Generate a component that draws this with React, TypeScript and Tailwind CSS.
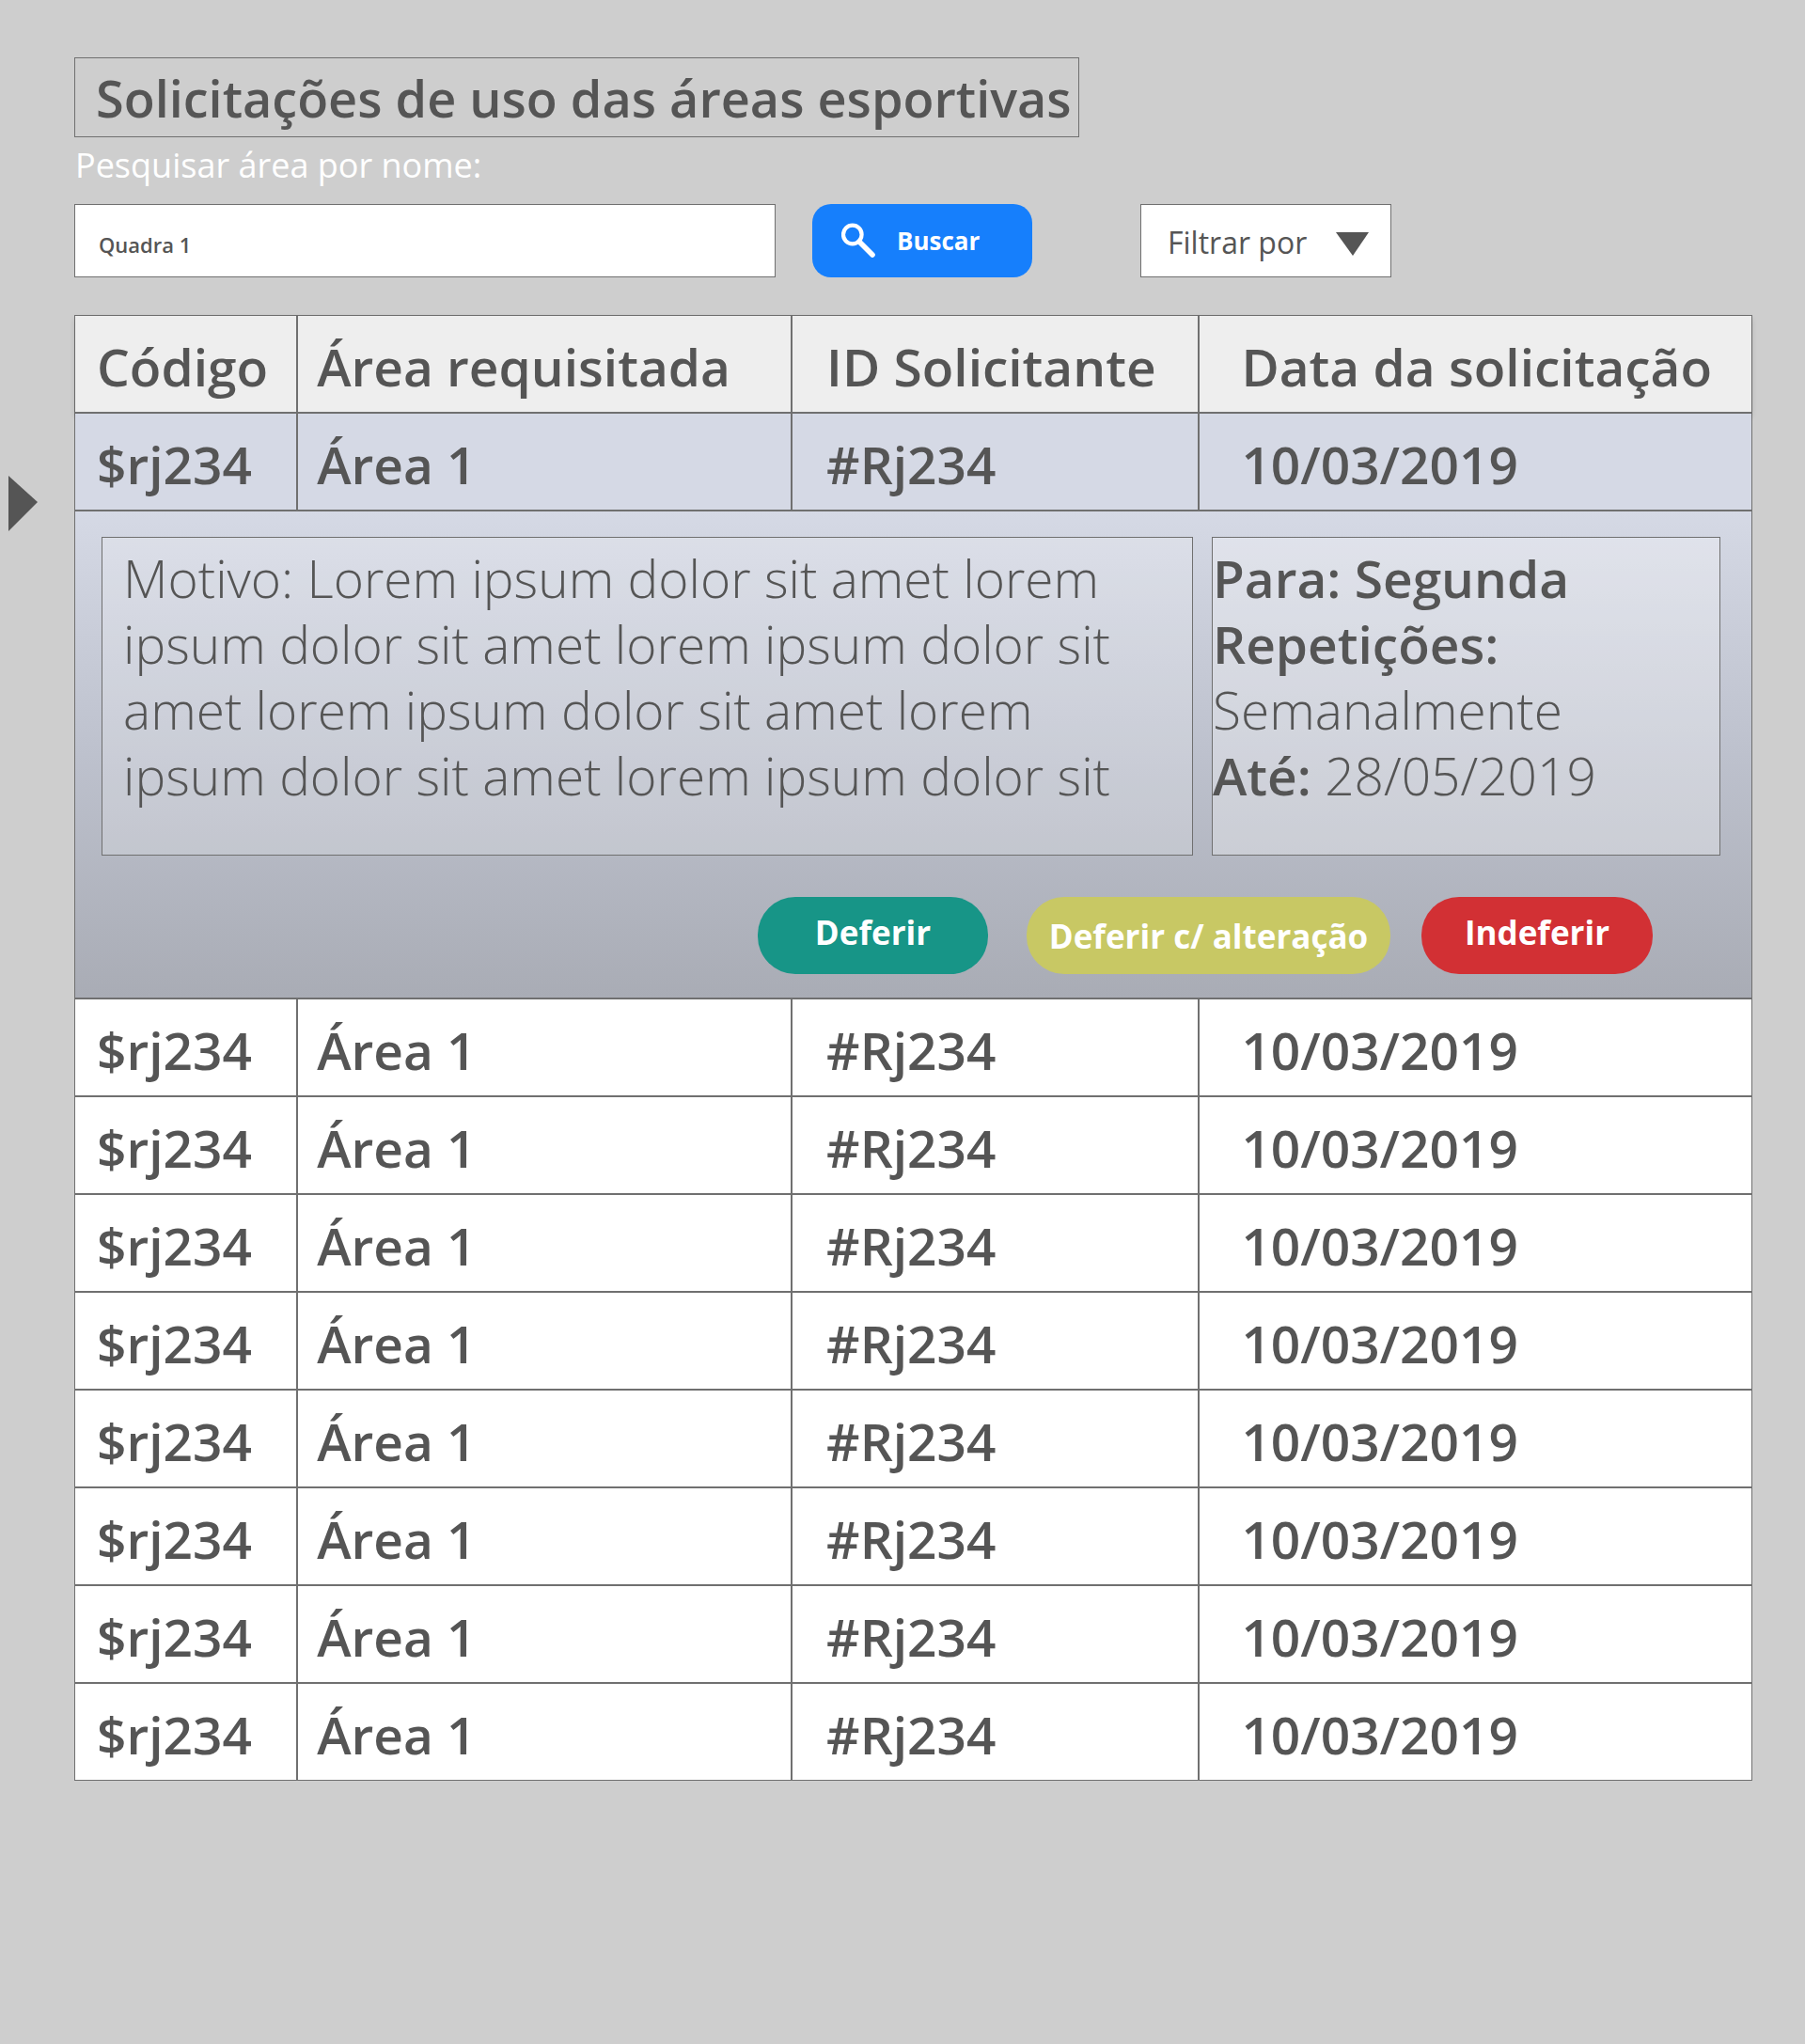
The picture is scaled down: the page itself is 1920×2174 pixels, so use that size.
import React from "react";

const requests = Array.from({ length: 8 }, (_, i) => ({
  key: i,
  code: "$rj234",
  area: "Área 1",
  requester: "#Rj234",
  date: "10/03/2019",
}));

const cell = "h-[104px] border-b-2 border-[#707070] pt-1.5 text-left font-semibold whitespace-nowrap";
const lastCell = "group-last:h-[102px] group-last:border-b-0";
const divider = "border-r-2";

function RequestRow({ selected = false, code, area, requester, date }: { selected?: boolean; code: string; area: string; requester: string; date: string }) {
  return (
    <tr className={selected ? "group bg-[#d5d9e5]" : "group bg-white"}>
      <td className={`${cell} ${lastCell} ${divider} pl-[23px]`}>{code}</td>
      <td className={`${cell} ${lastCell} ${divider} pl-5`}>{area}</td>
      <td className={`${cell} ${lastCell} ${divider} pl-9`}>{requester}</td>
      <td className={`${cell} ${lastCell} pl-11`}>{date}</td>
    </tr>
  );
}

export default function App() {
  return (
    <div className="flex min-h-screen bg-[#cecece] pr-14 pb-20 font-['Open_Sans','Noto_Sans',sans-serif] text-[#555555]">
      <aside className="w-[79px] shrink-0 pt-[506px] pl-[9px]">
        <svg width="31" height="59" viewBox="0 0 31 59" aria-hidden="true">
          <path d="M0 0 31 28 0 59Z" fill="#555555" />
        </svg>
      </aside>

      <main className="min-w-0 flex-1 pt-[61px]">
        <h1 className="flex h-[85px] w-[1069px] items-center border border-[#707070] pt-0.5 pl-[22px] text-[54px] font-semibold whitespace-nowrap">
          Solicitações de uso das áreas esportivas
        </h1>

        <form onSubmit={(e) => e.preventDefault()}>
          <label htmlFor="search" className="mt-1 block h-[67px] pl-px text-[36px] leading-[52px] text-white">
            Pesquisar área por nome:
          </label>
          <div className="flex h-[78px]">
            <input
              id="search"
              type="text"
              defaultValue="Quadra 1"
              className="w-[746px] border border-[#707070] bg-white pt-2 pl-[25px] text-[22px] font-semibold"
            />
            <button type="submit" className="ml-[39px] flex w-[234px] items-center rounded-[20px] bg-[#167ffc] pl-[31px] text-[26px] font-bold text-white">
              <svg width="36" height="38" viewBox="0 0 36 38" fill="none" stroke="#ffffff" aria-hidden="true">
                <circle cx="11.8" cy="12.5" r="9.8" strokeWidth="4.200" />
                <path d="M19 20 33 34" strokeWidth="5.600" strokeLinecap="round" />
              </svg>
              <span className="ml-[23px]">Buscar</span>
            </button>
            <div className="relative ml-[115px] w-[267px]">
              <select
                aria-label="Filtrar por"
                className="h-full w-full appearance-none border border-[#707070] bg-white pt-1 pl-7 text-[32px]"
              >
                <option>Filtrar por</option>
              </select>
              <svg className="pointer-events-none absolute top-[30px] right-6" width="35" height="25" viewBox="0 0 35 25" aria-hidden="true">
                <path d="M0 0H35L18 25Z" fill="#555555" />
              </svg>
            </div>
          </div>
        </form>

        <table className="mt-10 w-full table-fixed border-separate border-spacing-0 border border-[#707070] text-[55px] leading-[70px]">
          <colgroup>
            <col className="w-[13.300%]" />
            <col className="w-[29.500%]" />
            <col className="w-[24.300%]" />
            <col />
          </colgroup>
          <thead className="shadow-[0_3px_6px_#00000029]">
            <tr className="bg-[#eeeeee]">
              <th scope="col" className={`${cell} ${divider} pl-[23px]`}>Código</th>
              <th scope="col" className={`${cell} ${divider} pl-5`}>Área requisitada</th>
              <th scope="col" className={`${cell} ${divider} pl-9`}>ID Solicitante</th>
              <th scope="col" className={`${cell} pl-11`}>Data da solicitação</th>
            </tr>
          </thead>
          <tbody>
            <RequestRow selected code="$rj234" area="Área 1" requester="#Rj234" date="10/03/2019" />
            <tr>
              <td
                colSpan={4}
                className="border-b-2 border-[#707070] bg-linear-to-b from-[#d5d9e5] via-[#bdc1cd] to-[#a9acb5] pt-[27px] pr-[33px] pb-[25px] pl-7"
              >
                <div className="grid grid-cols-[1161fr_541fr] gap-5">
                  <p className="h-[339px] border border-[#707070] bg-white/20 pt-2 pr-8 pl-[22px] font-light">
                    Motivo: Lorem ipsum dolor sit amet lorem ipsum dolor sit amet lorem ipsum dolor sit amet lorem ipsum dolor sit amet lorem ipsum dolor sit amet lorem ipsum dolor sit
                  </p>
                  <div className="h-[339px] border border-[#707070] bg-white/30 pt-2 font-light">
                    <p className="font-semibold">Para: Segunda</p>
                    <p className="font-semibold">Repetições:</p>
                    <p>Semanalmente</p>
                    <p>
                      <strong className="font-semibold">Até:</strong> 28/05/2019
                    </p>
                  </div>
                </div>
                <div className="mt-11 mr-[72px] flex h-[82px] justify-end text-[35px] leading-[48px] font-bold text-white">
                  <button type="button" className="w-[245px] rounded-[40px] bg-[#179587] pb-1.5">Deferir</button>
                  <button type="button" className="ml-[41px] w-[387px] rounded-[40px] bg-[#c8c864] pt-0.5">Deferir c/ alteração</button>
                  <button type="button" className="ml-[33px] w-[246px] rounded-[40px] bg-[#d23034] pb-1.5">Indeferir</button>
                </div>
              </td>
            </tr>
            {requests.map(({ key, ...row }) => (
              <RequestRow key={key} {...row} />
            ))}
          </tbody>
        </table>
      </main>
    </div>
  );
}
